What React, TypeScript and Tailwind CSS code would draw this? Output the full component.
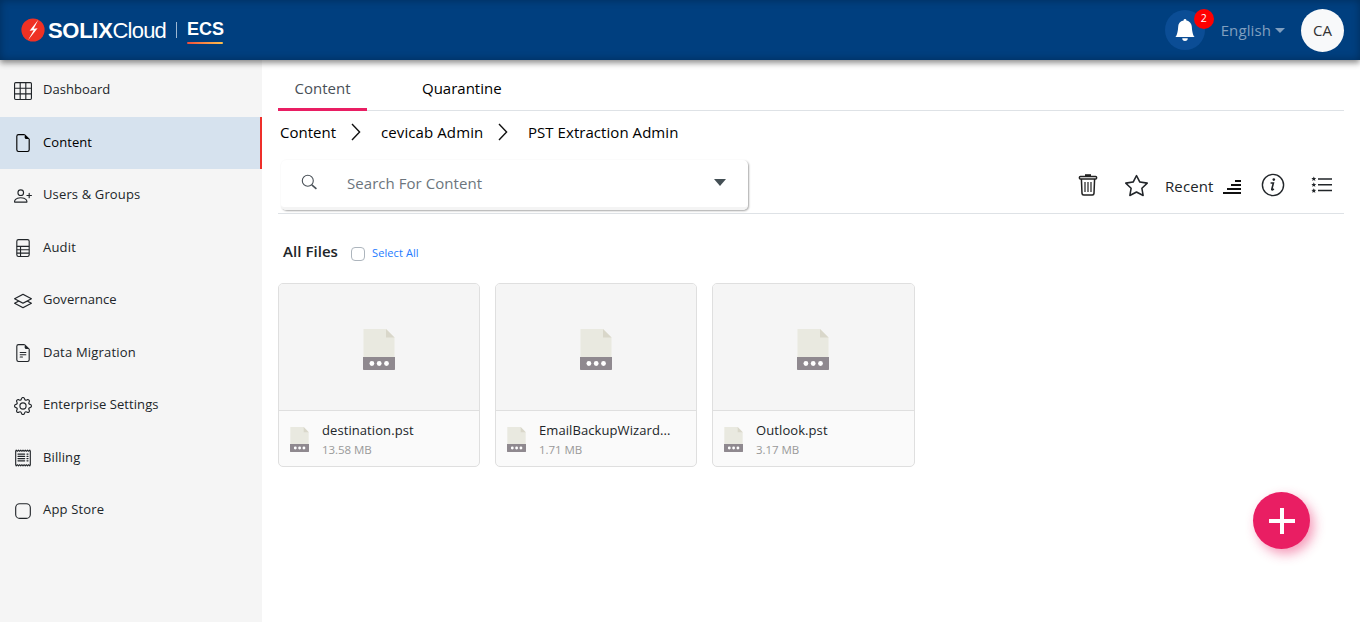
import React from "react";
import {
  BsApp,
  BsBellFill,
  BsGear,
  BsGrid3X3,
  BsLayers,
  BsPersonPlus,
  BsReceipt,
  BsStar,
} from "react-icons/bs";

function FileOutline({ lines = false }: { lines?: boolean }) {
  return (
    <svg viewBox="0 0 16 16" width="18" height="18" fill="currentColor">
      <path d="M4 0h5.5v1H4a1 1 0 0 0-1 1v12a1 1 0 0 0 1 1h8a1 1 0 0 0 1-1V4.5h1V14a2 2 0 0 1-2 2H4a2 2 0 0 1-2-2V2a2 2 0 0 1 2-2z" />
      <path d="M9.5 3V0L14 4.5h-3A1.5 1.5 0 0 1 9.5 3z" />
      {lines && (
        <path d="M5 11.5a.5.5 0 0 1 .5-.5h2a.5.5 0 0 1 0 1h-2a.5.5 0 0 1-.5-.5zm0-2a.5.5 0 0 1 .5-.5h5a.5.5 0 0 1 0 1h-5a.5.5 0 0 1-.5-.5zm0-2a.5.5 0 0 1 .5-.5h5a.5.5 0 0 1 0 1h-5a.5.5 0 0 1-.5-.5z" />
      )}
    </svg>
  );
}

function Spreadsheet() {
  return (
    <svg viewBox="0 0 16 16" width="18" height="18" fill="none" stroke="currentColor">
      <rect x="2.5" y=".5" width="11" height="15" rx="1.5" />
      <path d="M2.5 6.5h11M2.5 9.5h11M2.5 12.5h11M5.8 6.5v9" />
    </svg>
  );
}

const navItems = [
  { label: "Dashboard", icon: <BsGrid3X3 size={18} />, tracking: "tracking-[0.02px]" },
  { label: "Content", icon: <FileOutline />, active: true, tracking: "tracking-[0.08px]" },
  { label: "Users & Groups", icon: <BsPersonPlus size={18} />, tracking: "tracking-[0.14px]" },
  { label: "Audit", icon: <Spreadsheet />, tracking: "tracking-[0.2px]" },
  { label: "Governance", icon: <BsLayers size={18} />, tracking: "tracking-[0.05px]" },
  { label: "Data Migration", icon: <FileOutline lines />, tracking: "tracking-[0.2px]" },
  { label: "Enterprise Settings", icon: <BsGear size={18} />, tracking: "tracking-[0.08px]" },
  { label: "Billing", icon: <BsReceipt size={18} />, tracking: "tracking-[0.12px]" },
  { label: "App Store", icon: <BsApp size={18} />, tracking: "tracking-[0.16px]" },
];

const files = [
  { name: "destination.pst", size: "13.58 MB" },
  { name: "EmailBackupWizard...", size: "1.71 MB" },
  { name: "Outlook.pst", size: "3.17 MB" },
];

function FileGlyph({ className }: { className: string }) {
  return (
    <svg viewBox="0 0 32 41" preserveAspectRatio="none" className={className}>
      <path d="M.5 0H23l8.5 8.5V28H.5z" fill="#e9e9e0" />
      <path d="M23 0v8.5h8.5z" fill="#d9d7ca" />
      <path d="M0 28h32v12.2a.8.8 0 0 1-.8.8H.8a.8.8 0 0 1-.8-.8z" fill="#8f898f" />
      <circle cx="8.9" cy="34.5" r="2.4" fill="#fff" />
      <circle cx="16.2" cy="34.5" r="2.4" fill="#fff" />
      <circle cx="23.5" cy="34.5" r="2.4" fill="#fff" />
    </svg>
  );
}

function Chevron() {
  return (
    <svg width="10" height="18" viewBox="0 0 10 18" fill="none" stroke="#111" strokeWidth="1.4" className="-mt-[2px]">
      <path d="M1 1l7.6 8L1 17" />
    </svg>
  );
}

function Header() {
  return (
    <header className="relative z-10 flex h-[60px] shrink-0 items-center bg-[#003f7f] pl-[21px] pr-4 shadow-[0_3px_6px_rgba(0,0,0,0.45),inset_0_0_8px_rgba(0,0,0,0.3)]">
      <svg width="25" height="24" viewBox="0 0 25 24">
        <circle cx="12" cy="12" r="11.6" fill="#ef3124" />
        <path d="M17.3 1.8L8.6 12.8l4.1-.6L7 22.2l9.6-12-3.9.5z" fill="#fff" />
      </svg>
      <div className="ml-[2px] flex items-center pt-px font-['Liberation_Sans',Arial,sans-serif] text-[22px] leading-none text-white">
        <span className="font-bold tracking-[-0.3px]">SOLIX</span>
        <span className="tracking-[-0.8px]">Cloud</span>
      </div>
      <div className="ml-[10px] h-4 w-px bg-[#9db7d2]" />
      <div className="ml-[10px] flex flex-col pt-[4px] font-['Liberation_Sans',Arial,sans-serif] text-[18px] font-bold leading-none text-white">
        <span>ECS</span>
        <span className="mt-[4px] h-[2px] w-9 rounded-full bg-gradient-to-r from-[#ef4a3a] to-[#fcc04d]" />
      </div>
      <div className="ml-auto flex items-center">
        <div className="relative flex size-10 items-center justify-center rounded-full bg-[#0b4d95] text-white">
          <BsBellFill size={22} />
          <span className="absolute -top-[1px] left-[29px] flex size-5 items-center justify-center rounded-full bg-[#ff0000] pb-px text-[10.5px]">
            2
          </span>
        </div>
        <span className="ml-4 text-[15px] tracking-[0.1px] text-[#809fbf]">English</span>
        <span className="ml-1 border-x-[5px] border-t-[5px] border-x-transparent border-t-[#809fbf]" />
        <div className="ml-4 flex size-[43px] items-center justify-center rounded-full bg-[#f8f9fa] text-[15px] text-[#333]">
          CA
        </div>
      </div>
    </header>
  );
}

function Sidebar() {
  return (
    <nav className="flex w-[262px] shrink-0 flex-col gap-[0.5px] bg-[#f5f5f5] pt-[4.5px]">
      {navItems.map((item) => (
        <div
          key={item.label}
          className={
            item.active
              ? "flex h-[52px] items-center border-r-2 border-[#ee2f2a] bg-[#d6e2ee] pl-[14px] text-black"
              : "flex h-[52px] items-center pl-[14px] text-[#212529]"
          }
        >
          {item.icon}
          <span className={`ml-[11px] pb-[1px] text-[13px] ${item.tracking}`}>{item.label}</span>
        </div>
      ))}
    </nav>
  );
}

function Toolbar() {
  return (
    <div className="ml-auto flex items-center pt-[6px] text-[#212529]">
      <svg width="20" height="22" viewBox="0 0 20 22" fill="none" stroke="#222" strokeWidth="1.5">
        <path d="M7 1.2h6" strokeWidth="2" />
        <rect x="1.4" y="2.4" width="17.2" height="2.6" rx="1" />
        <path d="M3.4 5l.6 14.4a1.6 1.6 0 0 0 1.6 1.5h8.8a1.6 1.6 0 0 0 1.6-1.5L16.6 5" />
        <path d="M7 8v10M10 8v10M13 8v10" strokeWidth="1.2" />
      </svg>
      <BsStar size={23} className="ml-[27px]" />
      <span className="ml-[17px] w-[48px] whitespace-nowrap pt-[2px] text-[15px] tracking-[0.1px]">Recent</span>
      <svg width="18" height="15" viewBox="0 0 18 15" className="ml-[10px] mt-[4px]" fill="#111">
        <path d="M12 0h6v2h-6zM8 4h10v2H8zM4 8h14v2H4zM0 12h18v2H0z" />
      </svg>
      <svg width="24" height="24" viewBox="0 0 24 24" className="ml-[20px]" fill="none" stroke="#212529" strokeWidth="1.4">
        <circle cx="12" cy="12" r="10.6" />
        <path d="M9.6 10h2.8l-1.6 6.3c-.2.9.9.8 2-.4" strokeWidth="1.6" />
        <circle cx="12.8" cy="6.6" r="1.3" fill="#212529" stroke="none" />
      </svg>
      <svg width="22" height="18" viewBox="0 0 22 18" className="ml-[26px] mr-[11px]" fill="#212529">
        <path d="M7 2.2h14v1.5H7zM7 8h14v1.5H7zM7 13.8h14v1.5H7z" />
        {[2.8, 8.7, 14.6].map((y) => (
          <path key={y} transform={`translate(2.8 ${y})`} d="M0-2.4L.7-.8 2.4-.7 1.1.5 1.6 2.1 0 1.3-1.6 2.1-1.1.5-2.4-.7-.7-.8z" />
        ))}
      </svg>
    </div>
  );
}

export default function App() {
  return (
    <div className="flex h-[622px] w-[1360px] flex-col overflow-hidden bg-white font-['Open_Sans','Noto_Sans',sans-serif]">
      <Header />
      <div className="flex min-h-0 flex-1">
        <Sidebar />
        <main className="flex min-w-0 flex-1 flex-col px-4">
          <div className="flex h-[51px] shrink-0 border-b border-[#dee2e6] text-[15px]">
            <div className="-mb-px flex w-[89px] items-center justify-center border-b-[3px] border-[#e91e63] pt-[9px] text-[#495057]">
              Content
            </div>
            <div className="ml-[55px] flex items-center pt-[7px] text-black">Quarantine</div>
          </div>
          <div className="flex h-[43px] shrink-0 items-center pl-[2px] text-[15px] text-black">
            <span className="w-[71px] whitespace-nowrap">Content</span>
            <Chevron />
            <span className="ml-5 w-[117px] whitespace-nowrap tracking-[0.1px]">cevicab Admin</span>
            <Chevron />
            <span className="ml-5 whitespace-nowrap tracking-[0.05px]">PST Extraction Admin</span>
          </div>
          <div className="flex h-[60px] shrink-0 border-b border-[#dee2e6] pb-[3px] pl-[3px]">
            <div className="mt-[6px] flex h-[50px] w-[467px] items-center rounded-[5px] border-b-[3px] border-[#f4f4f4] pl-5 shadow-[1px_1px_2px_rgba(0,0,0,0.35)]">
              <svg width="17" height="17" viewBox="0 0 17 17" fill="none" stroke="#495057" strokeWidth="1.1" className="-mt-[2px]">
                <circle cx="6.8" cy="6.8" r="5.5" />
                <path d="M10.8 10.8l4.6 4" strokeWidth="1.6" />
              </svg>
              <span className="ml-[29px] text-[15px] tracking-[0.05px] text-[#6c757d]">Search For Content</span>
              <span className="-mt-[3px] ml-auto mr-[22px] border-x-[6px] border-t-[7px] border-x-transparent border-t-[#444f55]" />
            </div>
            <Toolbar />
          </div>
          <div className="flex h-[69px] shrink-0 items-center pb-[9px] pl-[5px] pt-[15px]">
            <span className="w-[68px] whitespace-nowrap text-[15px] font-semibold tracking-[0.05px] text-[#212529]">All Files</span>
            <span className="mt-1 size-[14px] rounded-[4px] border border-[#adb5bd] bg-white" />
            <span className="ml-[7px] mt-[3px] whitespace-nowrap text-[11px] tracking-[0.1px] text-[#247bff]">Select All</span>
          </div>
          <div className="flex gap-[14.6px]">
            {files.map((file) => (
              <div key={file.name} className="flex h-[184px] w-[202.45px] flex-col overflow-hidden rounded-[5px] border border-[#dfdfdf] bg-[#fafafa]">
                <div className="flex h-[127px] items-center justify-center border-b border-[#dfdfdf] bg-[#f5f5f5] pt-[5px]">
                  <FileGlyph className="h-[41px] w-8" />
                </div>
                <div className="flex flex-1 items-center pl-[11px]">
                  <FileGlyph className="mt-[2px] h-[25px] w-[19px]" />
                  <div className="ml-[13px] flex flex-col whitespace-nowrap pt-[3px]">
                    <span className="text-[13px] leading-[19px] tracking-[0.08px] text-[#212529]">{file.name}</span>
                    <span className="text-[11.5px] leading-[19px] tracking-[-0.05px] text-[#999]">{file.size}</span>
                  </div>
                </div>
              </div>
            ))}
          </div>
        </main>
      </div>
      <button className="absolute left-[1253px] top-[492px] flex size-[57px] items-center justify-center rounded-full bg-[#e91e63] shadow-[4px_5px_12px_rgba(233,30,99,0.45)]">
        <svg width="26" height="26" viewBox="0 0 26 26" fill="#fff">
          <path d="M11 0h4v11h11v4H15v11h-4V15H0v-4h11z" />
        </svg>
      </button>
    </div>
  );
}
